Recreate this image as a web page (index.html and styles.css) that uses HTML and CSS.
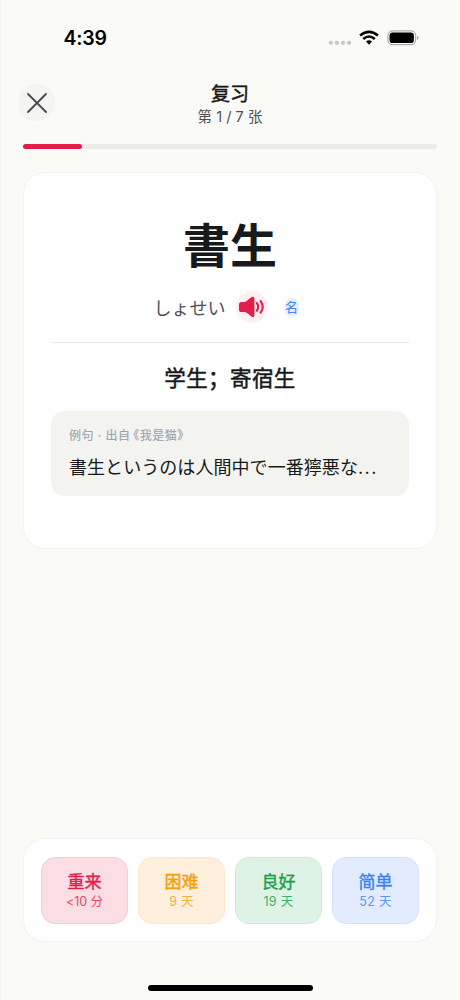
FILE: index.html
```html
<!DOCTYPE html>
<html lang="zh-CN">
<head>
<meta charset="utf-8">
<meta name="viewport" content="width=device-width, initial-scale=1">
<title>复习</title>
<link rel="stylesheet" href="styles.css">
</head>
<body>
<main class="screen">
  <div class="status">
    <span class="time">4:39</span>
    <div class="status-icons">
      <svg class="signal" width="24" height="16" viewBox="0 0 24 16" fill="#c6c7c4">
        <circle cx="2.8" cy="12.8" r="2.1"/><circle cx="8.9" cy="12.8" r="2.1"/><circle cx="15" cy="12.8" r="2.1"/><circle cx="21.1" cy="12.8" r="2.1"/>
      </svg>
      <svg class="wifi" width="20" height="16" viewBox="0 0 20 16" fill="none" stroke="#000" stroke-width="2.6">
        <path d="M1.1 5.5Q10-1.8 18.9 5.5"/>
        <path d="M4.2 9Q10 4 15.8 9"/>
        <path d="M7 11.6Q10 9 13 11.6L10 14.8Z" fill="#000" stroke="none"/>
      </svg>
      <svg class="battery" width="33" height="16" viewBox="0 0 33 16">
        <rect x=".9" y=".9" width="27.8" height="13.8" rx="4.6" fill="none" stroke="#9b9c99"/>
        <rect x="2.5" y="2.5" width="24.4" height="10.6" rx="3.2" fill="#000"/>
        <path d="M30.2 5.7Q31.6 6.5 31.6 7.8T30.2 9.9Z" fill="#9b9c99"/>
      </svg>
    </div>
  </div>

  <header class="header">
    <button class="close" aria-label="关闭">
      <svg width="20" height="20" viewBox="0 0 20 20" fill="none" stroke="#484854" stroke-width="1.8" stroke-linecap="round"><path d="M1 1L19 19M19 1L1 19"/></svg>
    </button>
    <div class="heading">
      <h1>复习</h1>
      <p>第 1 / 7 张</p>
    </div>
  </header>
  <div class="progress"><div class="progress-fill"></div></div>

  <section class="card">
    <div class="word" lang="ja">書生</div>
    <div class="reading-row">
      <span class="reading" lang="ja">しょせい</span>
      <button class="sound" aria-label="播放">
        <svg width="28" height="24" viewBox="0 0 28 24">
          <path d="M3.7 6.9H6.6C8.4 6.9 12.6 2 14.7 1.7Q16.4 1.5 16.4 3.5V20.5Q16.4 22.5 14.7 22.1C12.6 21.6 8.9 17.1 6.6 17.1H3.7Q1 17.1 1 14.5V9.5Q1 6.9 3.7 6.9Z" fill="#e11d48"/>
          <path d="M18.9 8.2Q21.4 11.9 18.9 15.6M22.6 6.2Q26.8 11.9 22.6 17.7" fill="none" stroke="#e11d48" stroke-width="2.1" stroke-linecap="round"/>
        </svg>
      </button>
      <span class="pos">名</span>
    </div>
    <div class="divider"></div>
    <div class="meaning">学生；寄宿生</div>
    <div class="example">
      <div class="source"><span>例句 · 出自</span><span class="book">《我是猫》</span></div>
      <div class="sentence" lang="ja">書生というのは人間中で一番獰悪な<span class="dots">...</span></div>
    </div>
  </section>

  <section class="ratings">
    <button class="rate again"><b>重来</b><span class="again-time">&lt;10 分</span></button>
    <button class="rate hard"><b>困难</b><span>9 天</span></button>
    <button class="rate good"><b>良好</b><span>19 天</span></button>
    <button class="rate easy"><b>简单</b><span>52 天</span></button>
  </section>
  <div class="home"></div>
</main>
</body>
</html>
```
FILE: styles.css
```css
* { box-sizing: border-box; }
body { margin: 0; background: #fafaf7; }
h1, p { margin: 0; }
button { border: 0; padding: 0; font: inherit; }
svg { display: block; }
.screen {
  width: 460px; height: 1000px; padding: 0 23px 9px;
  display: flex; flex-direction: column;
  background: #fafbf7; color: #18191b;
  border-left: 1px solid #f5f6f3; border-right: 1px solid #f5f6f3;
  font-family: Inter, "Noto Sans CJK SC", sans-serif;
  overflow: hidden;
}
[lang="ja"] { font-family: Inter, "Noto Sans CJK JP", sans-serif; }
.status { height: 76px; flex: none; padding: 0 16px 0 39.5px; display: flex; align-items: center; justify-content: space-between; }
.time { font-size: 19.5px; font-weight: 600; color: #000; line-height: 24px; letter-spacing: -.2px; }
.status-icons { display: flex; align-items: center; }
.signal { margin-right: 7px; }
.wifi { margin-right: 8px; }

.header { height: 68px; flex: none; display: grid; grid-template-columns: 37px 1fr 37px; align-items: start; margin: 0 -6px; }
.close { width: 37px; height: 37px; border-radius: 50%; background: #f4f4f1; display: grid; place-items: center; margin-top: 8px; }
.heading { text-align: center; padding-top: 6px; }
.heading h1 { font-size: 19px; line-height: 26px; font-weight: 400; -webkit-text-stroke: .5px currentColor; }
.heading p { font-size: 14.5px; line-height: 20px; margin-top: -1px; color: #4f4f59; letter-spacing: .05px; }
.progress { height: 5px; flex: none; margin-left: -1px; margin-right: -1px; border-radius: 3px; background: #ebece8; }
.progress-fill { width: 59px; height: 5px; border-radius: 3px; background: #e11d48; }

.card { height: 377px; flex: none; margin: 23px -1px 0; padding: 41px 27px 0; background: #fff; border: 1px solid #f3f4f2; border-radius: 22px; display: flex; flex-direction: column; }
.word { text-align: center; font-size: 47px; line-height: 64px; font-weight: 700; }
.reading-row { height: 32px; margin-top: 13px; margin-left: -8px; display: flex; align-items: center; justify-content: center; }
.reading { font-size: 18px; line-height: 28px; color: #51515b; padding-top: 3px; }
.sound { width: 32px; height: 32px; margin-left: 10px; border-radius: 50%; background: #ffeff2; display: grid; place-items: center; }
.pos { width: 14px; height: 19px; border-radius: 7px; background: #e8f0ff; color: #4385f6; font-size: 13px; line-height: 19px; -webkit-text-stroke: .12px currentColor; margin-left: 17px; margin-top: 1px; display: flex; justify-content: center; }
.divider { height: 1px; margin-top: 19px; background: #ebebed; }
.meaning { margin-top: 19px; text-align: center; font-size: 21.5px; line-height: 32px; font-weight: 400; -webkit-text-stroke: .5px currentColor; letter-spacing: .4px; }
.example { height: 85px; margin-top: 17px; padding: 15px 18px; border-radius: 14px; background: #f3f4f0; }
.source { font-size: 12px; line-height: 19px; color: #9da2ae; -webkit-text-stroke: .15px currentColor; letter-spacing: .45px; display: flex; }
.book { margin-left: -3px; }
.sentence { font-size: 18px; line-height: 28px; margin-top: 9px; white-space: nowrap; letter-spacing: .06px; }
.dots { letter-spacing: 1.4px; }

.ratings { height: 104px; flex: none; margin: auto -1px 43px; padding: 18px 17px; background: #fff; border: 1px solid #f3f4f2; border-radius: 22px; display: grid; grid-template-columns: repeat(4, 1fr); gap: 10px; }
.rate { height: 67px; border: 1px solid; border-radius: 14px; display: flex; flex-direction: column; align-items: center; padding-top: 11px; }
.rate b { font-size: 17px; line-height: 26px; font-weight: 400; -webkit-text-stroke: .4px currentColor; }
.rate span { font-size: 12.5px; line-height: 15px; margin-top: -1px; opacity: .8; letter-spacing: .3px; }
.rate .again-time { letter-spacing: -.1px; }
.again { background: #fbdde4; border-color: #f8cdd7; color: #e11d48; }
.hard { background: #fef0dc; border-color: #fde8c9; color: #f59e0b; }
.good { background: #dff2e6; border-color: #cdebd8; color: #16a34a; }
.easy { background: #e2ecfe; border-color: #d3e2fc; color: #3b82f6; }
.home { width: 165px; height: 6px; flex: none; align-self: center; border-radius: 3px; background: #000; }
```
